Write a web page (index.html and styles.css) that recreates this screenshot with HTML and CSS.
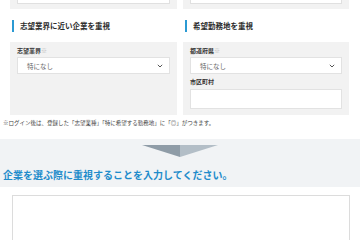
FILE: index.html
```html
<!DOCTYPE html>
<html lang="ja">
<head>
<meta charset="utf-8">
<link rel="stylesheet" href="styles.css">
</head>
<body>
<div class="cols">
  <div class="top-panel"><div class="top-input"></div></div>
  <div class="top-panel"><div class="top-input"></div></div>

  <h2 class="heading">志望業界に近い企業を重視</h2>
  <h2 class="heading">希望勤務地を重視</h2>

  <div class="panel">
    <div class="label">志望業界<span class="req">※</span></div>
    <div class="select"><span>特になし</span>
      <svg class="chev" width="6" height="4" viewBox="0 0 6 4"><path d="M0.8 0.8 L3 3 L5.2 0.8" fill="none" stroke="#555" stroke-width="1"/></svg>
    </div>
  </div>
  <div class="panel">
    <div class="label">都道府県<span class="req">※</span></div>
    <div class="select"><span>特になし</span>
      <svg class="chev" width="6" height="4" viewBox="0 0 6 4"><path d="M0.8 0.8 L3 3 L5.2 0.8" fill="none" stroke="#555" stroke-width="1"/></svg>
    </div>
    <div class="label label2">市区町村</div>
    <div class="text-input"></div>
  </div>
</div>

<p class="note">※ログイン後は、登録した「志望業種」「特に希望する勤務地」に「◎」がつきます。</p>

<div class="band">
  <svg class="arrow" width="76" height="12" viewBox="0 0 76 12">
    <polygon points="0,0 38,0 38,12" fill="#8f9ca7"/>
    <polygon points="38,0 76,0 38,12" fill="#b3bec7"/>
  </svg>
  <h3 class="band-title">企業を選ぶ際に重視することを入力してください。</h3>
</div>

<div class="textarea"></div>
</body>
</html>
```

FILE: styles.css
```css
html, body {
  margin: 0;
  padding: 0;
  background: #fff;
  font-family: "Noto Sans CJK JP", "Noto Sans", sans-serif;
  color: #333;
}

.cols {
  display: grid;
  grid-template-columns: 167px 166px;
  column-gap: 6px;
  padding: 0 11px 0 10px;
}

.top-panel {
  background: #f2f2f2;
  padding: 0 7px 5px;
}
.top-input {
  height: 3px;
  background: #fff;
  border: 1px solid #e0e0e0;
  border-top: 0;
}

.heading {
  margin: 11px 0 10px 2px;
  border-left: 2px solid #2b9ad3;
  padding-left: 6px;
  font-size: 7.5px;
  line-height: 12px;
  font-weight: bold;
  color: #2b2b2b;
}

.panel {
  background: #f2f2f2;
  padding: 5px 7px 6px;
}

.label {
  font-size: 6px;
  line-height: 8px;
  font-weight: bold;
  color: #333;
}
.req {
  color: #bbb;
  font-weight: normal;
}
.label2 {
  margin-top: 4px;
}

.select {
  margin-top: 2px;
  height: 17px;
  box-sizing: border-box;
  background: #fff;
  border: 1px solid #e2e2e2;
  display: flex;
  align-items: center;
  justify-content: space-between;
  padding: 0 6px 0 9px;
  font-size: 6.5px;
  color: #666;
}
.chev {
  display: block;
}

.text-input {
  margin-top: 3px;
  height: 20px;
  box-sizing: border-box;
  background: #fff;
  border: 1px solid #e2e2e2;
}

.note {
  margin: 4px 0 0 3px;
  font-size: 5.5px;
  line-height: 8px;
  color: #444;
}

.band {
  margin-top: 12px;
  background: #f1f3f5;
  padding: 6px 0 5px;
  display: flex;
  flex-direction: column;
}
.arrow {
  display: block;
  align-self: center;
}
.band-title {
  margin: 11px 0 0 3px;
  font-size: 10px;
  line-height: 14px;
  font-weight: bold;
  color: #1e8ccb;
}

.textarea {
  margin: 8px 10px 0 12px;
  height: 60px;
  border: 1px solid #dcdcdc;
  background: #fff;
}
```
